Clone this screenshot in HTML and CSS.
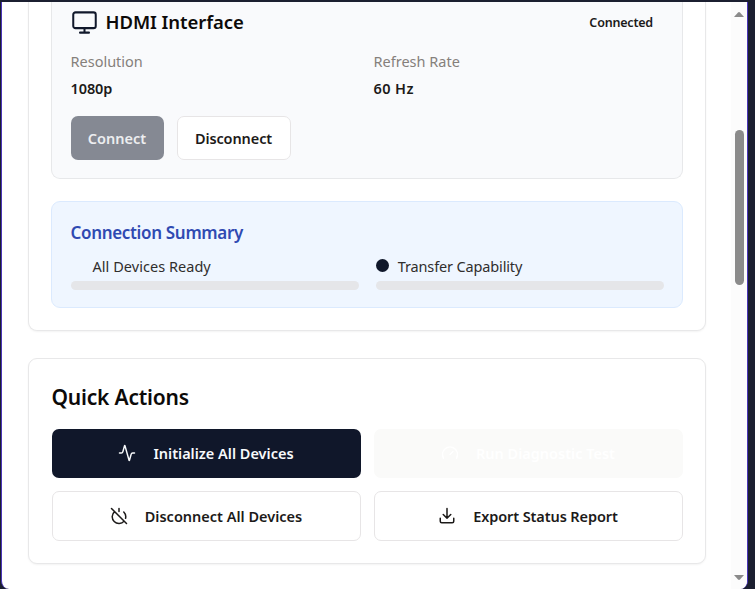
FILE: index.html
```
<!DOCTYPE html>
<html lang="en">
<head>
<meta charset="utf-8">
<title>Device Control</title>
<link rel="stylesheet" href="styles.css">
</head>
<body>
<div class="window">
  <main class="content">
    <section class="card connections">
      <article class="device">
        <header class="device-head">
          <svg class="monitor" viewBox="0 0 24 24"><rect x="2" y="3" width="20" height="14" rx="2"/><path d="M8 21h8M12 17v4"/></svg>
          <h3>HDMI Interface</h3>
          <span class="status">Connected</span>
        </header>
        <dl class="specs">
          <div><dt>Resolution</dt><dd>1080p</dd></div>
          <div><dt>Refresh Rate</dt><dd class="rate">60 Hz</dd></div>
        </dl>
        <div class="device-actions">
          <button class="btn connect" disabled>Connect</button>
          <button class="btn outline disconnect">Disconnect</button>
        </div>
      </article>
      <article class="summary">
        <h4>Connection Summary</h4>
        <div class="meters">
          <div><div class="meter-label"><i class="dot clear"></i><span class="ready">All Devices Ready</span></div><div class="bar"></div></div>
          <div><div class="meter-label"><i class="dot"></i><span class="capability">Transfer Capability</span></div><div class="bar"></div></div>
        </div>
      </article>
    </section>
    <section class="card quick">
      <h2>Quick Actions</h2>
      <div class="actions">
        <button class="btn primary"><svg class="icon" viewBox="0 0 24 24"><path d="M22 12h-2.48a2 2 0 0 0-1.93 1.46l-2.35 8.36a.25.25 0 0 1-.48 0L9.24 2.18a.25.25 0 0 0-.48 0l-2.35 8.36A2 2 0 0 1 4.49 12H2"/></svg><span>Initialize All Devices</span></button>
        <button class="btn faded"><svg class="icon" viewBox="0 0 24 24"><path d="m12 14 4-4M3.34 19a10 10 0 1 1 17.32 0"/></svg><span>Run Diagnostic Test</span></button>
        <button class="btn outline"><svg class="icon" viewBox="0 0 24 24"><path d="M18.36 6.64A9 9 0 0 1 20.77 15M6.16 6.16a9 9 0 1 0 12.68 12.68M12 2v4M2 2l20 20"/></svg><span>Disconnect All Devices</span></button>
        <button class="btn outline"><svg class="icon" viewBox="0 0 24 24"><path d="M21 15v4a2 2 0 0 1-2 2H5a2 2 0 0 1-2-2v-4M7 10l5 5 5-5M12 15V2"/></svg><span class="export">Export Status Report</span></button>
      </div>
    </section>
  </main>
  <aside class="scrollbar">
    <svg class="arrow" viewBox="0 0 10 5"><path d="M0 5 4 .5Q5-.3 6 .5L10 5z"/></svg>
    <div class="thumb"></div>
    <svg class="arrow" viewBox="0 0 10 5"><path d="M0 0 4 4.500Q5 5.300 6 4.500L10 0z"/></svg>
  </aside>
</div>
</body>
</html>
```
FILE: styles.css
```
* { box-sizing: border-box; }
body {
  margin: 0;
  height: 589px;
  padding: 2px 7px 0 1px;
  overflow: hidden;
  background: #1b1f30;
  font-family: "Noto Sans", "Open Sans", sans-serif;
  font-size: 14.5px;
  color: #1c1a19;
}
h2, h3, h4, dl, dd { margin: 0; font-weight: 600; }
span, dt, dd { white-space: nowrap; }
svg { fill: none; stroke: currentColor; stroke-width: 2; stroke-linecap: round; stroke-linejoin: round; flex: none; }

.window {
  display: flex;
  height: 587px;
  border: solid #4a35b8;
  border-width: 0 1px;
  border-radius: 0 0 8px 8px;
  background: #fff;
  overflow: hidden;
}
.content { width: 729px; padding: 0 25px 0 26px; }
.card {
  border: 1px solid #e8e8e9;
  border-radius: 9px;
  background: #fff;
  box-shadow: 0 1px 2px rgba(0, 0, 0, .05);
}
.connections { height: 329px; padding: 0 22px; border-top: 0; border-radius: 0 0 9px 9px; }
.device {
  height: 177px;
  padding: 7px 18px 0 18.500px;
  border: 1px solid #e7e8ea;
  border-top: 0;
  border-radius: 0 0 9px 9px;
  background: #f9fafc;
}
.device-head { display: flex; align-items: center; height: 26px; padding-right: 11px; }
.monitor { width: 27px; height: 27px; margin-right: 8px; color: #11182b; stroke-width: 1.8; }
h3 { flex: 1; font-size: 18.5px; line-height: 26px; letter-spacing: -.06px; color: #0c0a09; }
.status { font-size: 12.5px; font-weight: 600; letter-spacing: -.2px; }
.specs { display: grid; grid-template-columns: 303px 1fr; padding-top: 14px; }
dt { height: 24px; line-height: 24px; color: #85807b; }
dd { height: 30px; line-height: 30px; letter-spacing: -.1px; }
.rate { letter-spacing: .4px; }
.device-actions { display: flex; gap: 13px; margin-top: 13px; }
.btn {
  display: flex;
  align-items: center;
  justify-content: center;
  padding: 0;
  border: 0;
  border-radius: 7px;
  font: 600 14.5px "Noto Sans", "Open Sans", sans-serif;
  color: #1c1a19;
}
.outline { border: 1px solid #e7e5e6; background: #fff; }
.connect { width: 93px; height: 44px; background: #858993; color: #edeef0; }
.disconnect { width: 114px; height: 44px; letter-spacing: -.1px; }
.summary {
  height: 107px;
  margin-top: 22px;
  padding: 17px 18px 0 18.500px;
  border: 1px solid #dbeafe;
  border-radius: 9px;
  background: #eff6ff;
}
h4 { font-size: 17px; line-height: 28px; letter-spacing: -.33px; color: #2f4ab2; }
.meters { display: grid; grid-template-columns: 1fr 1fr; gap: 17px; margin-top: 6px; }
.meter-label { display: flex; align-items: center; gap: 9px; height: 25px; color: #302e2d; }
.dot { width: 13px; height: 13px; margin-bottom: 1px; border-radius: 50%; background: #0f172a; }
.clear { background: transparent; }
.ready { letter-spacing: .04px; }
.capability { letter-spacing: -.14px; }
.bar { height: 9px; margin-top: 3px; border-radius: 5px; background: #e5e6e9; }

.quick { height: 206px; margin-top: 27px; padding: 22px 22px 0 22.500px; }
h2 { font-size: 21px; line-height: 32px; letter-spacing: -.2px; color: #0c0a09; }
.actions { display: grid; grid-template-columns: 309px 309px; grid-template-rows: 49px 50px; gap: 13px; margin-top: 16px; }
.icon { width: 18px; height: 18px; margin-right: 17px; }
.export { letter-spacing: -.1px; }
.primary { padding-bottom: 1px; background: #10172a; color: #f8fafc; }
.faded { padding-bottom: 1px; background: #fafaf9; color: #fff; }

.scrollbar {
  display: flex;
  flex-direction: column;
  align-items: center;
  width: 16px;
  padding: 10px 0 9px;
  background: #fcfcfc;
}
.arrow { width: 10px; height: 5px; fill: #8b8b8b; stroke: none; }
.thumb { width: 9px; height: 155px; margin: 113px 0 auto; border-radius: 5px; background: #8b8b8b; }
dt { font-weight: 400; }
```
